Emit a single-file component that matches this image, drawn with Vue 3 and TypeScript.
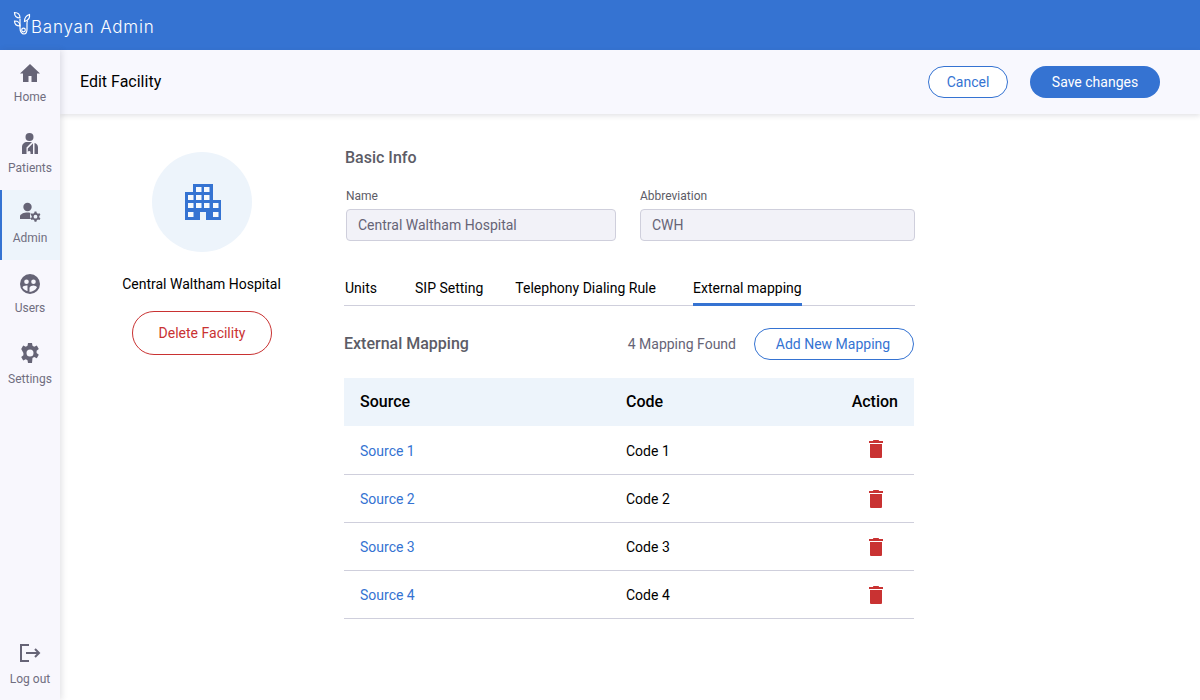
<template>
  <div class="app">
    <header class="topbar">
      <svg class="logo" width="22" height="28" viewBox="0 0 22 28" fill="none" stroke="#fff" stroke-width="1.200">
        <path d="M7 8v9c0 3.500 2 6 4 6s3-2 3-5v-6c0-1 .5-2 1-2" />
        <circle cx="10.500" cy="19" r="1.800" />
        <path d="M1.500 1.500c3 0 5.500 1.500 5.500 5.500-3.500 0-5.500-2-5.500-5.500zM1.500 10c3 0 5.500 1.500 5.500 5-3.500 0-5.500-1.500-5.500-5zM16.500 3.500c.5 3.500-1 6-5 7 0-3.500 1.500-6 5-7z" />
      </svg>
      <span class="brand">Banyan Admin</span>
    </header>
    <div class="body">
      <nav class="sidebar">
        <a v-for="item in navItems" :key="item.label" class="nav-item" :class="{ active: item.label === 'Admin' }">
          <svg width="24" height="24" viewBox="0 0 24 24" fill="#666476" v-html="item.icon"></svg>
          <span>{{ item.label }}</span>
        </a>
        <a class="nav-item logout">
          <svg width="24" height="24" viewBox="0 0 24 24" fill="none" stroke="#666476" stroke-width="2">
            <path d="M11 4H3v16h8M8 12h13M17 8l4 4-4 4" />
          </svg>
          <span>Log out</span>
        </a>
      </nav>
      <main class="main">
        <div class="page-head">
          <h1>Edit Facility</h1>
          <div class="head-actions">
            <button class="btn outline cancel">Cancel</button>
            <button class="btn solid">Save changes</button>
          </div>
        </div>
        <div class="content">
          <aside class="facility">
            <div class="avatar">
              <svg class="building" width="36" height="36" viewBox="0 0 36 36">
                <path fill="#3573d2" d="M8 0h20v16h8v20H21v-8h-6v8H0V8h8z" />
                <g fill="#f6f9fd">
                  <rect v-for="w in windows" :key="w[0] + '-' + w[1]" :x="w[0]" :y="w[1]" width="5.500" height="5" />
                </g>
              </svg>
            </div>
            <div class="facility-name">Central Waltham Hospital</div>
            <button class="btn danger">Delete Facility</button>
          </aside>
          <section class="details">
            <h2 class="basic-title">Basic Info</h2>
            <div class="fields">
              <label class="field name">
                <span>Name</span>
                <input value="Central Waltham Hospital" disabled />
              </label>
              <label class="field abbr">
                <span>Abbreviation</span>
                <input value="CWH" disabled />
              </label>
            </div>
            <div class="tabs">
              <a v-for="t in tabs" :key="t" class="tab" :class="{ current: t === 'External mapping' }">{{ t }}</a>
            </div>
            <div class="map-head">
              <h2>External Mapping</h2>
              <span class="found">{{ rows.length }} Mapping Found</span>
              <button class="btn outline add">Add New Mapping</button>
            </div>
            <table class="map-table">
              <thead>
                <tr>
                  <th class="c-source">Source</th>
                  <th class="c-code">Code</th>
                  <th class="c-action">Action</th>
                </tr>
              </thead>
              <tbody>
                <tr v-for="r in rows" :key="r.source">
                  <td class="link">{{ r.source }}</td>
                  <td>{{ r.code }}</td>
                  <td class="trash">
                    <svg width="14" height="18" viewBox="0 0 14 18" fill="#c93232">
                      <path d="M4.300 0h5.400l.3 1h4v2H0V1h4zM1 4h12v13.300l-.7.7H1.700l-.7-.7z" />
                    </svg>
                  </td>
                </tr>
              </tbody>
            </table>
          </section>
        </div>
      </main>
    </div>
  </div>
</template>

<script setup lang="ts">
const navItems = [
  { label: 'Home', icon: '<path d="M12 3 2 12.500h3V21h5.500v-6h3v6H19v-8.500h3z"/>' },
  {
    label: 'Patients',
    icon: '<circle cx="11.500" cy="5" r="4"/><path d="M4 22v-7c0-3 2.500-5 5-5h5L8.500 15.500V22zM9.800 22v-5.500L15 11.300V22h-2.500v-2a1.400 1.400 0 0 0-2.700 0zM16.500 11c2 .5 3.500 2 3.500 4.500V22h-3.500z"/>',
  },
  {
    label: 'Admin',
    icon: '<circle cx="9.500" cy="7" r="4.200"/><path d="M2 19v-2.500c0-2.500 4-4 7.500-4 1 0 2 .1 3 .4-.8 1.800-.7 4.300.4 6.100z"/><path fill-rule="evenodd" d="m16.600 11.500 1.800 0 .4 1.500 1.200.7 1.500-.4.900 1.500-1.100 1.100v1.400l1.100 1.100-.9 1.500-1.500-.4-1.200.7-.4 1.500h-1.800l-.4-1.500-1.200-.7-1.500.4-.9-1.500 1.100-1.100v-1.400l-1.100-1.100.9-1.500 1.500.4 1.200-.7zm.9 3.300a1.900 1.900 0 1 0 0 3.800 1.900 1.900 0 0 0 0-3.800z"/>',
  },
  {
    label: 'Users',
    icon: '<path fill-rule="evenodd" d="M12 2a10 10 0 1 1 0 20 10 10 0 0 1 0-20zM8.500 7.500a2.300 2.300 0 1 0 0 4.600 2.300 2.300 0 0 0 0-4.600zm7 0a2.300 2.300 0 1 0 0 4.600 2.300 2.300 0 0 0 0-4.600zM8.500 13.500c-2 0-3.500.8-4 1.800.8 1.600 2.500 3 4.500 3.700h.5v-5.400zm7 0c-1.500 0-3.500.7-4 2.200V20c3.500 0 6-2 7.500-4.700-.7-1-2-1.800-3.500-1.800z"/>',
  },
  {
    label: 'Settings',
    icon: '<path fill-rule="evenodd" d="m10 2h4l.5 2.800 1.700.9 2.600-1.100 2 3.400-2.200 1.800v2.200l2.200 1.800-2 3.400-2.600-1.100-1.700.9L14 22h-4l-.5-2.800-1.700-.9-2.600 1.100-2-3.400 2.200-1.800v-2.200L3.200 8l2-3.400 2.600 1.100 1.700-.9zm2 6.500a3.500 3.500 0 1 0 0 7 3.500 3.500 0 0 0 0-7z"/>',
  },
]

// window cells of the building icon, [x, y]
const windows = [
  [11, 3], [19, 3],
  [3, 11], [11, 11], [19, 11],
  [3, 19], [11, 19], [19, 19], [28, 19],
  [3, 28], [28, 28],
]

const tabs = ['Units', 'SIP Setting', 'Telephony Dialing Rule', 'External mapping']

const rows = [
  { source: 'Source 1', code: 'Code 1' },
  { source: 'Source 2', code: 'Code 2' },
  { source: 'Source 3', code: 'Code 3' },
  { source: 'Source 4', code: 'Code 4' },
]
</script>

<style>
html,
body {
  margin: 0;
  background: #fff;
}
</style>

<style scoped>
.app {
  width: 1200px;
  height: 700px;
  display: flex;
  flex-direction: column;
  overflow: hidden;
  font-family: Roboto, "Liberation Sans", sans-serif;
  color: #000;
}
.topbar {
  height: 50px;
  flex: none;
  background: #3573d2;
  display: flex;
  align-items: center;
  padding-left: 13px;
  color: #fff;
}
.logo {
  margin-top: -1px;
}
.brand {
  font-family: Inter, sans-serif;
  font-weight: 300;
  font-size: 17px;
  letter-spacing: 0.8px;
  margin-left: -4px;
  margin-top: 3px;
}
.body {
  flex: 1;
  display: flex;
  min-height: 0;
}
.sidebar {
  width: 60px;
  flex: none;
  background: #f8f7fd;
  box-shadow: 2px 0 6px rgba(60, 60, 80, 0.14);
  display: flex;
  flex-direction: column;
  align-items: stretch;
  z-index: 2;
}
.nav-item {
  height: 70px;
  flex: none;
  display: flex;
  flex-direction: column;
  align-items: center;
  padding-top: 11px;
  box-sizing: border-box;
  font-size: 12px;
  color: #706e80;
  gap: 4px;
}
.nav-item span {
  line-height: 16px;
}
.nav-item:nth-child(2),
.nav-item:nth-child(4) {
  padding-top: 12px;
}
.nav-item:nth-child(3),
.nav-item:nth-child(5) {
  padding-top: 11px;
  gap: 6px;
}
.nav-item.active {
  background: #edf4fb;
  box-shadow: inset 2px 0 0 #3573d2;
  padding-top: 10px;
}
.nav-item.logout {
  margin-top: auto;
  height: 60px;
  padding-top: 1px;
  gap: 6px;
}
.main {
  flex: 1;
  min-width: 0;
}
.page-head {
  height: 64px;
  background: #f8f8fe;
  box-shadow: 0 2px 5px rgba(60, 60, 80, 0.14);
  display: flex;
  align-items: center;
  justify-content: space-between;
  padding: 0 40px 0 20px;
}
.page-head h1 {
  margin: -2px 0 0;
  font-size: 16px;
  font-weight: 400;
}
.head-actions {
  display: flex;
  gap: 22px;
}
.btn {
  font-family: inherit;
  font-size: 14px;
  border-radius: 16px;
  height: 32px;
  padding: 0 0 1px;
  box-sizing: border-box;
  background: #fff;
}
.btn.outline {
  border: 1px solid #3573d2;
  color: #3573d2;
}
.btn.solid {
  border: 0;
  background: #3573d2;
  color: #fff;
  width: 130px;
}
.cancel {
  width: 80px;
}
.content {
  display: flex;
}
.facility {
  width: 284px;
  flex: none;
  display: flex;
  flex-direction: column;
  align-items: center;
  padding-top: 38px;
}
.avatar {
  width: 100px;
  height: 100px;
  border-radius: 50%;
  background: #edf4fb;
  display: flex;
  align-items: center;
  justify-content: center;
}
.building {
  margin-left: 2px;
}
.facility-name {
  font-size: 14px;
  line-height: 20px;
  margin-top: 22px;
  margin-left: -1px;
}
.btn.danger {
  width: 140px;
  height: 44px;
  border-radius: 22px;
  border: 1px solid #c93232;
  color: #c93232;
  margin-top: 17px;
}
.details {
  width: 571px;
  padding-top: 34px;
}
.basic-title {
  margin: 0 0 0 1px;
  font-size: 16px;
  line-height: 20px;
  font-weight: 500;
  color: #5c5c66;
}
.fields {
  display: flex;
  gap: 24px;
  margin-top: 20px;
}
.field {
  display: flex;
  flex-direction: column;
  gap: 5px;
}
.field span {
  font-size: 12px;
  line-height: 16px;
  color: #5c5c66;
}
.field.name {
  width: 270px;
  margin-left: 2px;
}
.field.abbr {
  width: 275px;
}
.field input {
  height: 32px;
  box-sizing: border-box;
  width: 100%;
  border: 1px solid #cfcfdc;
  border-radius: 4px;
  background: #f2f2f8;
  padding: 0 11px;
  font-family: inherit;
  font-size: 14px;
  color: #666476;
  -webkit-text-fill-color: #666476;
  opacity: 1;
}
.tabs {
  display: flex;
  gap: 38px;
  margin-top: 30px;
  padding-left: 1px;
  width: 570px;
  height: 34px;
  border-bottom: 1px solid #cfcfdc;
}
.tab {
  font-size: 14px;
  line-height: 34px;
  height: 34px;
}
.tab:nth-child(3) {
  margin-left: -6px;
}
.tab:nth-child(4) {
  margin-left: -1px;
  letter-spacing: 0.02px;
}
.tab.current {
  border-bottom: 3px solid #3573d2;
  height: 32px;
  line-height: 34px;
}
.map-head {
  display: flex;
  align-items: center;
  margin-top: 22px;
  height: 32px;
  width: 570px;
}
.map-head h2 {
  margin: -2px 0 0;
  font-size: 16px;
  font-weight: 500;
  color: #5c5c66;
  flex: 1;
}
.found {
  font-size: 14px;
  color: #666476;
}
.add {
  width: 160px;
  margin-left: 18px;
  padding-right: 2px;
}
.map-table {
  margin-top: 18px;
  width: 570px;
  border-collapse: collapse;
  font-size: 14px;
}
.map-table thead tr {
  background: #edf4fb;
  height: 48px;
}
.map-table tbody tr {
  height: 48px;
}
.map-table th {
  font-size: 16px;
  font-weight: 500;
  text-align: left;
  padding: 0 0 2px;
}
.map-table td {
  padding: 2px 0 0;
  border-bottom: 1px solid #cfcfdc;
}
.c-source {
  width: 266px;
  padding-left: 16px !important;
}
.c-action {
  text-align: right !important;
  padding-right: 16px !important;
}
.map-table td:first-child {
  padding-left: 16px;
}
.link {
  color: #3573d2;
}
.map-table td.trash {
  text-align: right;
  padding: 2px 31px 0 0;
  line-height: 0;
}
.map-table tr:first-child td.trash {
  padding: 0 31px 2px 0;
}
</style>
